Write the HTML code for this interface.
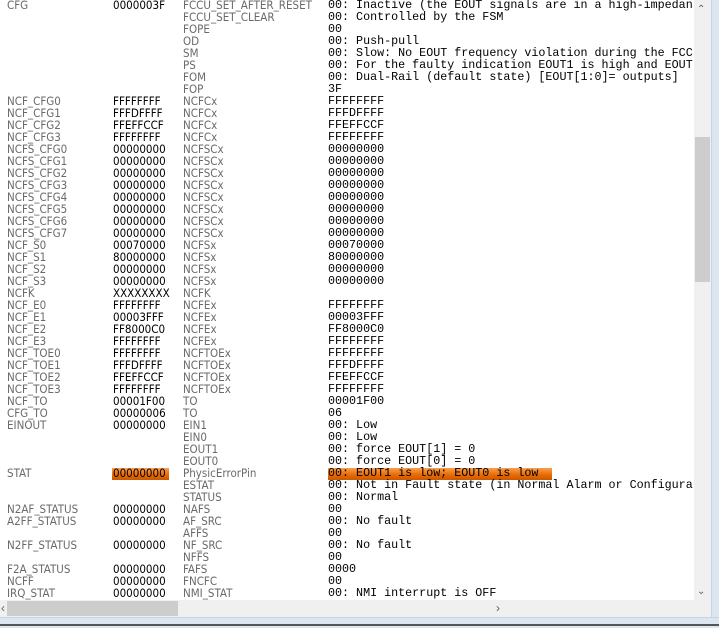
<!DOCTYPE html><html><head><style>
body{margin:0;width:719px;height:627px;background:#fff;position:relative;overflow:hidden}
.r{position:absolute;left:0;height:12px;width:694px;white-space:nowrap}
.r span{position:absolute;top:0;line-height:12px}
.n{left:7px;color:#6a6a6a;font:11.5px "DejaVu Sans Condensed","Liberation Sans",sans-serif}
.v{left:113px;color:#000;font:11.5px "DejaVu Sans Condensed","Liberation Sans",sans-serif}
.f{left:183px;color:#6a6a6a;font:11.5px "DejaVu Sans Condensed","Liberation Sans",sans-serif}
.d{left:328px;color:#000;font:11.7px "Liberation Mono",monospace}
.hl{background:linear-gradient(#f7a050,#e86800 60%,#c85800);}
</style></head><body>
<div id="c"></div>
<div style="position:absolute;left:694px;top:0;width:17px;height:600px;background:#f0f0f0"></div>
<div style="position:absolute;left:695px;top:137px;width:15px;height:145px;background:#cdcdcd"></div>
<div style="position:absolute;left:697px;top:4px;font:10px sans-serif;color:#606060">&#8963;</div>
<div style="position:absolute;left:697px;top:586px;font:10px sans-serif;color:#606060">&#8964;</div>
<div style="position:absolute;left:0;top:600px;width:711px;height:17px;background:#f0f0f0"></div>
<div style="position:absolute;left:7px;top:601px;width:171px;height:15px;background:#cdcdcd"></div>
<div style="position:absolute;left:1px;top:601px;font:12px sans-serif;color:#606060">&#8249;</div>
<div style="position:absolute;left:496px;top:601px;font:12px sans-serif;color:#606060">&#8250;</div>
<div style="position:absolute;left:711px;top:0;width:8px;height:627px;background:#dce6f0;border-left:1px solid #c8d4e0"></div>
<div style="position:absolute;left:0;top:617px;width:719px;height:10px;background:#dce6f0;border-top:1px solid #c8d4e0"></div>
<div style="position:absolute;left:0;top:624px;width:719px;height:2px;background:#555"></div>
<script>
var R=[["CFG","0000003F","FCCU_SET_AFTER_RESET","00: Inactive (the EOUT signals are in a high-impedan"],
["","","FCCU_SET_CLEAR","00: Controlled by the FSM"],["","","FOPE","00"],["","","OD","00: Push-pull"],
["","","SM","00: Slow: No EOUT frequency violation during the FCC"],["","","PS","00: For the faulty indication EOUT1 is high and EOUT"],
["","","FOM","00: Dual-Rail (default state) [EOUT[1:0]= outputs]"],["","","FOP","3F"],
["NCF_CFG0","FFFFFFFF","NCFCx","FFFFFFFF"],["NCF_CFG1","FFFDFFFF","NCFCx","FFFDFFFF"],["NCF_CFG2","FFEFFCCF","NCFCx","FFEFFCCF"],["NCF_CFG3","FFFFFFFF","NCFCx","FFFFFFFF"]];
for(var i=0;i<8;i++)R.push(["NCFS_CFG"+i,"00000000","NCFSCx","00000000"]);
R.push(["NCF_S0","00070000","NCFSx","00070000"],["NCF_S1","80000000","NCFSx","80000000"],["NCF_S2","00000000","NCFSx","00000000"],["NCF_S3","00000000","NCFSx","00000000"],
["NCFK","XXXXXXXX","NCFK",""],["NCF_E0","FFFFFFFF","NCFEx","FFFFFFFF"],["NCF_E1","00003FFF","NCFEx","00003FFF"],["NCF_E2","FF8000C0","NCFEx","FF8000C0"],["NCF_E3","FFFFFFFF","NCFEx","FFFFFFFF"],
["NCF_TOE0","FFFFFFFF","NCFTOEx","FFFFFFFF"],["NCF_TOE1","FFFDFFFF","NCFTOEx","FFFDFFFF"],["NCF_TOE2","FFEFFCCF","NCFTOEx","FFEFFCCF"],["NCF_TOE3","FFFFFFFF","NCFTOEx","FFFFFFFF"],
["NCF_TO","00001F00","TO","00001F00"],["CFG_TO","00000006","TO","06"],["EINOUT","00000000","EIN1","00: Low"],["","","EIN0","00: Low"],
["","","EOUT1","00: force EOUT[1] = 0"],["","","EOUT0","00: force EOUT[0] = 0"],["STAT","00000000","PhysicErrorPin","00: EOUT1 is low; EOUT0 is low"],
["","","ESTAT","00: Not in Fault state (in Normal Alarm or Configura"],["","","STATUS","00: Normal"],["N2AF_STATUS","00000000","NAFS","00"],
["A2FF_STATUS","00000000","AF_SRC","00: No fault"],["","","AFFS","00"],["N2FF_STATUS","00000000","NF_SRC","00: No fault"],["","","NFFS","00"],
["F2A_STATUS","00000000","FAFS","0000"],["NCFF","00000000","FNCFC","00"],["IRQ_STAT","00000000","NMI_STAT","00: NMI interrupt is OFF"]);
var h="";
R.forEach(function(r,i){var t=-1+12*i;var hl=i==39;
h+='<div class="r" style="top:'+t+'px">';
if(hl){h+='<div class="hl" style="position:absolute;left:112px;top:1px;width:57px;height:12px"></div><div class="hl" style="position:absolute;left:328px;top:1px;width:224px;height:12px"></div>';}
h+='<span class="n">'+r[0]+'</span><span class="v">'+r[1]+'</span><span class="f">'+r[2]+'</span><span class="d">'+r[3].replace(/ /g,"&nbsp;")+'</span></div>';});
document.getElementById("c").innerHTML=h;
</script>
</body></html>
